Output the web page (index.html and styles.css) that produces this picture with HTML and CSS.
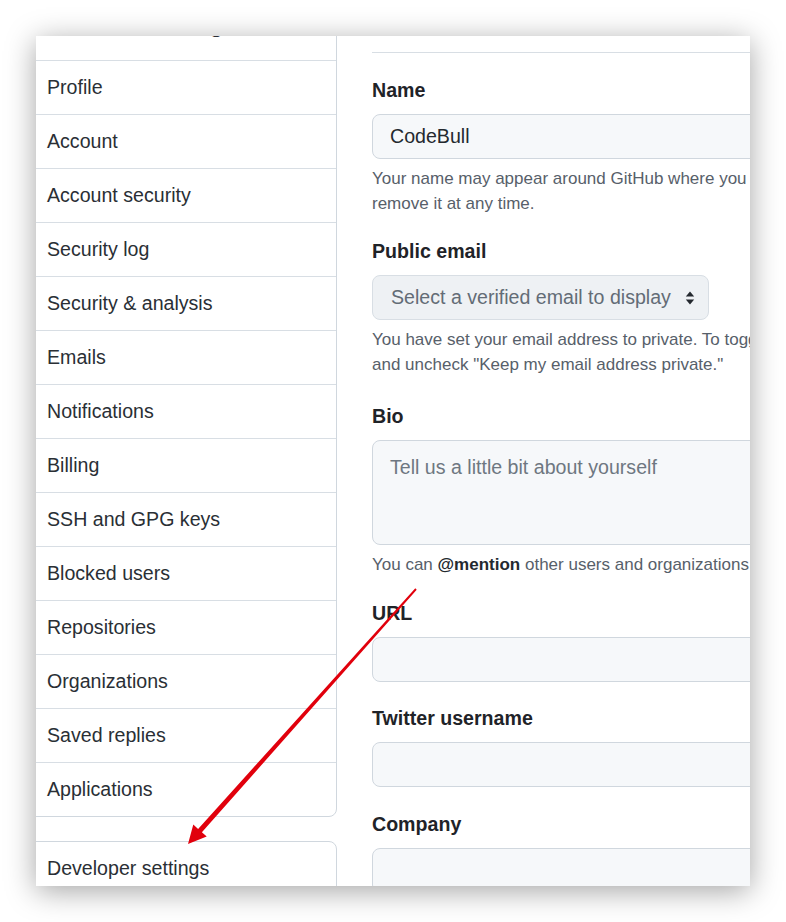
FILE: index.html
```html
<!DOCTYPE html>
<html lang="en">
<head>
<meta charset="utf-8">
<title>Public profile settings</title>
<link rel="stylesheet" href="styles.css">
</head>
<body>
<div class="frame">
  <div class="card">
    <aside class="sidebar">
      <nav class="menu">
        <div class="menu-heading">Account settings</div>
        <a class="menu-item">Profile</a>
        <a class="menu-item">Account</a>
        <a class="menu-item">Account security</a>
        <a class="menu-item">Security log</a>
        <a class="menu-item">Security &amp; analysis</a>
        <a class="menu-item">Emails</a>
        <a class="menu-item">Notifications</a>
        <a class="menu-item">Billing</a>
        <a class="menu-item">SSH and GPG keys</a>
        <a class="menu-item">Blocked users</a>
        <a class="menu-item">Repositories</a>
        <a class="menu-item">Organizations</a>
        <a class="menu-item">Saved replies</a>
        <a class="menu-item">Applications</a>
      </nav>
      <nav class="menu menu--dev">
        <a class="menu-item">Developer settings</a>
      </nav>
    </aside>
    <main class="content">
      <div class="subhead"></div>
      <div class="group group--name">
        <div class="label">Name</div>
        <div class="field">CodeBull</div>
        <p class="note">Your name may appear around GitHub where you contribute or are mentioned. You can<br>remove it at any time.</p>
      </div>
      <div class="group group--email">
        <div class="label">Public email</div>
        <div class="select">
          <span>Select a verified email to display</span>
          <svg class="select-icon" width="10" height="16" viewBox="0 0 10 16"><path d="M5 1.5 L9.2 6.5 H0.8 Z M5 14.5 L9.2 9.5 H0.8 Z" fill="#24292f"/></svg>
        </div>
        <p class="note">You have set your email address to private. To toggle email privacy, go to email settings<br>and uncheck "Keep my email address private."</p>
      </div>
      <div class="group">
        <div class="label">Bio</div>
        <div class="field field--area"><span class="placeholder">Tell us a little bit about yourself</span></div>
        <p class="note">You can <b>@mention</b> other users and organizations to link to them.</p>
      </div>
      <div class="group">
        <div class="label">URL</div>
        <div class="field"></div>
      </div>
      <div class="group group--twitter">
        <div class="label">Twitter username</div>
        <div class="field"></div>
      </div>
      <div class="group">
        <div class="label">Company</div>
        <div class="field"></div>
      </div>
    </main>
  </div>
  <svg class="arrow" width="786" height="922" viewBox="0 0 786 922">
    <polygon fill="#e1000c" points="416.7,589.7 201.9,832.3 206.7,836.6 188,844 193.3,824.6 198.1,828.9 415.3,588.3"/>
  </svg>
</div>
</body>
</html>
```
FILE: styles.css
```css
* { box-sizing: border-box; }

html, body {
  margin: 0;
  padding: 0;
  background: #ffffff;
}

body {
  font-family: "Liberation Sans", Arial, sans-serif;
  color: #1f2328;
}

.frame {
  position: relative;
  width: 786px;
  height: 922px;
  padding: 36px 36px 36px 36px;
}

.card {
  display: flex;
  width: 714px;
  height: 850px;
  background: #ffffff;
  overflow: hidden;
  box-shadow: 0 5px 28px rgba(0, 0, 0, 0.36);
}

/* ---------- sidebar ---------- */
.sidebar {
  flex: 0 0 301px;
  display: flex;
  flex-direction: column;
  margin-top: -30px;
}

.menu {
  margin-left: -12px;
  border: 1px solid #d0d7de;
  border-radius: 8px;
  background: #ffffff;
  display: flex;
  flex-direction: column;
}

.menu--dev {
  margin-top: 24px;
}

.menu-heading,
.menu-item {
  display: block;
  height: 54px;
  padding: 12px 22px;
  font-size: 19.6px;
  line-height: 29px;
  color: #2a2f35;
  border-bottom: 1px solid #d8dee4;
  white-space: nowrap;
}

.menu-item:last-child {
  border-bottom: none;
  height: 53px;
}

.menu-heading {
  font-weight: bold;
  font-size: 22px;
  padding-left: 32px;
  padding-top: 3px;
}

/* ---------- content ---------- */
.content {
  flex: 0 0 520px;
  margin-left: 35px;
}

.subhead {
  height: 17px;
  border-bottom: 1px solid #d8dee4;
  margin-bottom: 22.5px;
}

.group {
  margin-bottom: 21.5px;
}

.group--name { margin-bottom: 20.5px; }
.group--email { margin-bottom: 24.5px; }
.group--twitter { margin-bottom: 22.5px; }

.label {
  font-size: 19.6px;
  line-height: 29px;
  font-weight: bold;
  color: #1f2328;
  margin-bottom: 9.5px;
}

.field {
  height: 45px;
  width: 520px;
  padding: 0 17px;
  border: 1px solid #d0d7de;
  border-radius: 8px;
  background: #f6f8fa;
  font-size: 19.6px;
  line-height: 43px;
  color: #24292f;
}

.field--area {
  height: 105px;
  padding-top: 12px;
  line-height: 29px;
}

.placeholder {
  color: #6e7781;
}

.select {
  display: flex;
  align-items: center;
  justify-content: space-between;
  width: 337px;
  height: 45px;
  padding: 0 13px 0 18px;
  border: 1px solid #d8dee4;
  border-radius: 8px;
  background: #eef1f4;
  font-size: 19.6px;
  color: #636c76;
}

.select-icon {
  display: block;
}

.note {
  margin: 7px 0 0 0;
  font-size: 17px;
  line-height: 25px;
  color: #57606a;
  white-space: nowrap;
}

.note b {
  color: #24292f;
}

/* ---------- annotation ---------- */
.arrow {
  position: absolute;
  left: 0;
  top: 0;
  pointer-events: none;
}
```
